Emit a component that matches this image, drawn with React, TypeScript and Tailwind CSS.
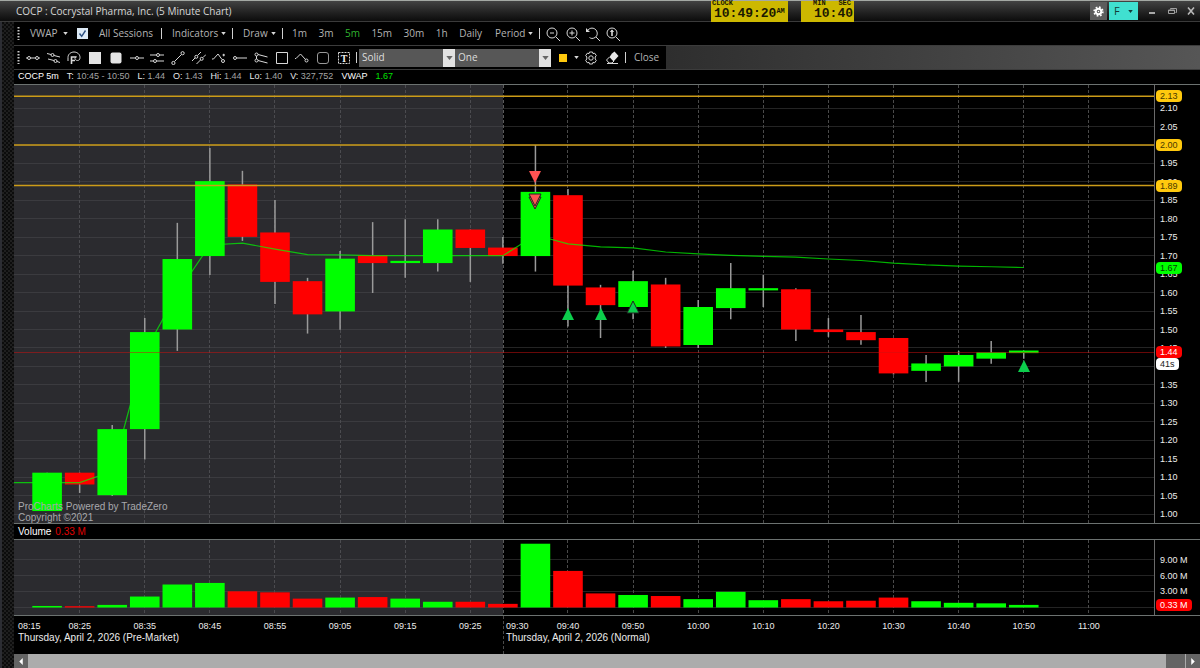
import type { ReactNode } from "react"

type Candle = {
  open: number
  close: number
  high: number
  low: number
  volume: number
}

// [open, close, high, low, volume in millions], one entry for every 5 minutes from 08:20
const rawCandles: number[][] = [
  [1.008, 1.112, 1.112, 1.008, 0.2],
  [1.112, 1.08, 1.112, 1.057, 0.15],
  [1.051, 1.23, 1.241, 1.049, 0.4],
  [1.23, 1.493, 1.531, 1.148, 2],
  [1.5, 1.691, 1.789, 1.442, 4.3],
  [1.699, 1.902, 1.992, 1.648, 4.6],
  [1.893, 1.751, 1.93, 1.74, 3],
  [1.763, 1.629, 1.851, 1.569, 2.8],
  [1.631, 1.541, 1.64, 1.489, 1.6],
  [1.549, 1.692, 1.713, 1.499, 1.8],
  [1.701, 1.68, 1.791, 1.599, 1.9],
  [1.68, 1.686, 1.799, 1.64, 1.6],
  [1.68, 1.771, 1.799, 1.657, 1],
  [1.771, 1.721, 1.771, 1.629, 1],
  [1.722, 1.699, 1.751, 1.678, 0.6],
  [1.699, 1.873, 2, 1.657, 12.1],
  [1.864, 1.619, 1.881, 1.508, 6.9],
  [1.614, 1.566, 1.621, 1.477, 2.6],
  [1.561, 1.631, 1.659, 1.528, 2.3],
  [1.622, 1.454, 1.64, 1.45, 2.1],
  [1.458, 1.561, 1.58, 1.45, 1.5],
  [1.558, 1.612, 1.68, 1.528, 2.9],
  [1.606, 1.612, 1.648, 1.561, 1.3],
  [1.609, 1.5, 1.612, 1.469, 1.5],
  [1.5, 1.493, 1.531, 1.48, 1.1],
  [1.493, 1.471, 1.539, 1.459, 1.2],
  [1.477, 1.381, 1.477, 1.378, 1.8],
  [1.388, 1.408, 1.431, 1.358, 1.1],
  [1.4, 1.431, 1.442, 1.358, 0.8],
  [1.421, 1.438, 1.469, 1.407, 0.7],
  [1.436, 1.443, 1.443, 1.421, 0.4],
]

const candles: Candle[] = rawCandles.map(([open, close, high, low, volume]) => ({
  open,
  close,
  high,
  low,
  volume,
}))

const vwap = [
  1.085, 1.085, 1.116, 1.439, 1.599, 1.729, 1.734, 1.718, 1.703, 1.702, 1.7, 1.7,
  1.7, 1.7, 1.7, 1.756, 1.732, 1.724, 1.721, 1.71, 1.705, 1.701, 1.698, 1.696,
  1.691, 1.687, 1.68, 1.675, 1.672, 1.67, 1.668,
]

const PLOT_WIDTH = 1140
const PRICE_HEIGHT = 438
const VOLUME_HEIGHT = 75
const SESSION_X = 489

const xAt = (i: number) => 33.1 + 32.555 * i
const priceY = (price: number) => 429 - (price - 1) * 369
const volumeY = (volume: number) => 67 - volume * 5.23

const percent = (value: number, total: number) => `${(value / total) * 100}%`

const gridPrices = Array.from({ length: 23 }, (_, i) => 1 + i * 0.05)
const levels = [2.132, 2, 1.89]

const timeTicks = [
  "08:25", "08:35", "08:45", "08:55", "09:05", "09:15", "09:25", "09:40", "09:50",
  "10:00", "10:10", "10:20", "10:30", "10:40", "10:50", "11:00",
].map((label) => {
  const [h, m] = label.split(":").map(Number)
  return { label, x: xAt((h * 60 + m - 500) / 5) }
})

const priceBadges = [
  { text: "2.13", price: 2.132, color: "bg-[#ffc90e] text-[#4a3a00]" },
  { text: "2.00", price: 2, color: "bg-[#ffc90e] text-[#4a3a00]" },
  { text: "1.89", price: 1.89, color: "bg-[#ffc90e] text-[#4a3a00]" },
  { text: "1.67", price: 1.667, color: "bg-[#00ff00] text-[#064006]" },
  { text: "1.44", price: 1.439, color: "bg-[#ff0000] text-white" },
  { text: "41s", price: 1.406, color: "bg-white text-[#222]" },
]

const quote = [
  ["T:", "10:45 - 10:50"],
  ["L:", "1.44"],
  ["O:", "1.43"],
  ["Hi:", "1.44"],
  ["Lo:", "1.40"],
  ["V:", "327,752"],
]

function Icon({ children }: { children: ReactNode }) {
  return (
    <svg
      viewBox="0 0 14 14"
      className="h-[14px] w-[14px] shrink-0"
      fill="none"
      stroke="#d8d8d8"
      strokeWidth="1"
      aria-hidden="true"
    >
      {children}
    </svg>
  )
}

function Caret() {
  return (
    <svg viewBox="0 0 6 4" className="h-[3px] w-[5px] shrink-0" aria-hidden="true">
      <path d="M0 0h6L3 4z" fill="#d8d8d8" />
    </svg>
  )
}

function Grip() {
  return (
    <svg viewBox="0 0 3 13" className="h-[13px] w-[3px] shrink-0" aria-hidden="true">
      <path d="M1.5 0v13" stroke="#c8c8c8" strokeWidth="2" strokeDasharray="1.5 1.5" />
    </svg>
  )
}

function Divider() {
  return <span className="h-[11px] w-px shrink-0 bg-[#d0d0d0]" />
}

const drawTools: { name: string; art: ReactNode }[] = [
  {
    name: "Segment",
    art: <path d="M0 7h1.500M4.500 7h5M12.500 7H14M1.500 7a1.500 1.500 0 1 0 3 0a1.500 1.500 0 1 0-3 0M9.500 7a1.500 1.500 0 1 0 3 0a1.500 1.500 0 1 0-3 0" />,
  },
  {
    name: "Channel",
    art: (
      <path d="M0 2.500l4 1M7 4.500l6 1.500M1 8l6 1.500M10 10.500l3 1M4 4a1.500 1.500 0 1 0 3 0a1.500 1.500 0 1 0-3 0M7 10a1.500 1.500 0 1 0 3 0a1.500 1.500 0 1 0-3 0" />
    ),
  },
  {
    name: "Fibonacci",
    art: (
      <>
        <path d="M1 10V6.500C1 3 4 1 7 1s6 2 6 5.500c0 2-1 3-2.500 3S8 8.500 8 7.500s1-2 2-1.500" />
        <path d="M4.500 13V6H9M4.500 9.500H8" strokeWidth="1.600" />
      </>
    ),
  },
  { name: "Filled rectangle", art: <path d="M1 1h12v12H1z" fill="#e4e4e4" stroke="none" /> },
  {
    name: "Filled rounded rectangle",
    art: <rect x="1.500" y="1.500" width="11" height="11" rx="2" fill="#e4e4e4" stroke="none" />,
  },
  { name: "Horizontal line", art: <path d="M0 7h5.500M8.500 7H14M5.500 7a1.500 1.500 0 1 0 3 0a1.500 1.500 0 1 0-3 0" /> },
  {
    name: "Parallel lines",
    art: (
      <path d="M0 4h6.500M9.500 4H14M0 10h3.500M6.500 10H14M6.500 4a1.500 1.500 0 1 0 3 0a1.500 1.500 0 1 0-3 0M3.500 10a1.500 1.500 0 1 0 3 0a1.500 1.500 0 1 0-3 0" />
    ),
  },
  {
    name: "Trend line",
    art: <path d="M3.500 10.500l7-7M.8 12a1.600 1.600 0 1 0 3.200 0a1.600 1.600 0 1 0-3.200 0M10 2.200a1.600 1.600 0 1 0 3.200 0a1.600 1.600 0 1 0-3.200 0" />,
  },
  {
    name: "Trend channel",
    art: (
      <path d="M0 10l3-3M5.500 4.500L9 1M4.500 13l4-4M11 6.500L14 3.500M2.800 5.800a1.500 1.500 0 1 0 3 0a1.500 1.500 0 1 0-3 0M8.200 7.800a1.500 1.500 0 1 0 3 0a1.500 1.500 0 1 0-3 0" />
    ),
  },
  {
    name: "Polyline",
    art: <path d="M0 8h1.500l4.500-5 4 5.500M9.500 10a1.500 1.500 0 1 0 3 0a1.500 1.500 0 1 0-3 0M10.500 4h2.500M11.700 2.800v2.500" />,
  },
  { name: "Ray", art: <path d="M3.500 7H14M.5 7a1.500 1.500 0 1 0 3 0a1.500 1.500 0 1 0-3 0" /> },
  {
    name: "Fan",
    art: (
      <path d="M4 3.500l9.500 2.500M4 9.500l9.500 2.500M2.500 5v3M1 3.500a1.500 1.500 0 1 0 3 0a1.500 1.500 0 1 0-3 0M1 9.500a1.500 1.500 0 1 0 3 0a1.500 1.500 0 1 0-3 0" />
    ),
  },
  { name: "Rectangle", art: <path d="M1.500 1.500h11v11h-11z" /> },
  {
    name: "Angle",
    art: <path d="M0 7.500h1L5.500 3l5 5.500M10 9.500a1.500 1.500 0 1 0 3 0a1.500 1.500 0 1 0-3 0" />,
  },
  { name: "Rounded rectangle", art: <rect x="1.500" y="1.500" width="11" height="11" rx="2.500" stroke="#999" /> },
  {
    name: "Text",
    art: (
      <>
        <path d="M1.500 1.500h11v11h-11z" strokeDasharray="2 1" />
        <text
          x="7"
          y="10.500"
          textAnchor="middle"
          fontSize="10"
          fontWeight="bold"
          fontFamily="Liberation Serif, serif"
          fill="#f0f0f0"
          stroke="none"
        >
          T
        </text>
      </>
    ),
  },
]

function TitleBar() {
  return (
    <header className="relative flex h-[22px] items-center border-t border-b border-t-[#a4a9a4] border-b-[#3a3a3a] bg-linear-to-b from-[#434343] to-[#0c0c0c] pl-4">
      <h1 className="flex-1 text-[10px] text-[#d6d6d6]">COCP : Cocrystal Pharma, Inc. (5 Minute Chart)</h1>
      <button className="mr-[2px] flex h-[18px] w-[17px] items-center justify-center bg-[#5c5c5c]" aria-label="Settings">
        <svg viewBox="0 0 14 14" className="h-[11px] w-[11px]" aria-hidden="true">
          <circle cx="7" cy="7" r="3.500" fill="none" stroke="#fff" strokeWidth="2.500" />
          <circle cx="7" cy="7" r="5.600" fill="none" stroke="#fff" strokeWidth="2" strokeDasharray="2.200 2.200" />
          <circle cx="7" cy="7" r="1" fill="#fff" />
        </svg>
      </button>
      <button className="flex h-[18px] w-[29px] items-center justify-between bg-[#40e0d0] px-[5px] text-[11px] text-[#123c38]">
        F
        <svg viewBox="0 0 6 4" className="h-[3px] w-[5px]" aria-hidden="true">
          <path d="M0 0h6L3 4z" fill="#123c38" />
        </svg>
      </button>
      <div className="flex w-[62px] items-center justify-between pr-[5px] pl-[11px]">
        <button className="flex h-3 w-[8px] items-center" aria-label="Minimize">
          <span className="mt-1 h-[2px] w-[6px] bg-[#a8a8a8]" />
        </button>
        <button aria-label="Restore">
          <svg viewBox="0 0 9 8" className="h-[8px] w-[9px]" fill="none" stroke="#a0a0a0" aria-hidden="true">
            <path d="M2.500 2.500v-1h6v4h-1M.5 3h6v3.500h-6zM.5 3.500h6" />
          </svg>
        </button>
        <button aria-label="Close window">
          <svg viewBox="0 0 8 8" className="h-[8px] w-[8px]" aria-hidden="true">
            <path d="M1 0.500l6 7M7 .5L1 7.500" stroke="#b8b8b8" strokeWidth="1.600" />
          </svg>
        </button>
      </div>

      {/* Floating clock widgets sit over the title bar */}
      <div className="absolute top-0 left-[711px] h-[21px] w-[77px] bg-[#cdb800] px-px font-['Liberation_Mono',monospace] font-bold text-[#1c1800]">
        <div className="text-[7px] leading-[5px]">CLOCK</div>
        <div className="flex pl-[2px] text-[13px] leading-4">
          10:49:20<span className="text-[7px] leading-[10px]">AM</span>
        </div>
      </div>
      <div className="absolute top-0 left-[801px] h-[21px] w-[53px] bg-[#cdb800] pr-px text-right font-['Liberation_Mono',monospace] font-bold text-[#1c1800]">
        <div className="flex justify-between pr-[2px] pl-3 text-[7px] leading-[5px]">
          <span>MIN</span>
          <span>SEC</span>
        </div>
        <div className="text-[13px] leading-4">10:40</div>
      </div>
    </header>
  )
}

function MainToolbar() {
  return (
    <div className="flex h-6 items-center border-b border-[#3c3c3c] pl-[3px] text-[10px] text-[#b4b4b4]">
      <Grip />
      <button className="ml-[10px] flex w-[38px] items-center justify-between">
        VWAP <Caret />
      </button>
      <label className="ml-[9px] flex items-center gap-[11px]">
        <span className="relative flex h-[11px] w-[11px]">
          <input type="checkbox" defaultChecked className="peer h-[11px] w-[11px] appearance-none bg-[#dce9f5]" />
          <svg
            viewBox="0 0 11 11"
            className="pointer-events-none absolute inset-0 hidden h-[11px] w-[11px] peer-checked:block"
            fill="none"
            aria-hidden="true"
          >
            <path d="M2.500 5.500l2.200 2.800L8.500 2.500" stroke="#2b4f80" strokeWidth="1.400" />
          </svg>
        </span>
        <span className="w-[62px]">All Sessions</span>
      </label>
      <Divider />
      <button className="ml-[10px] mr-[6px] flex w-[54px] items-center justify-between">
        Indicators <Caret />
      </button>
      <Divider />
      <button className="ml-[10px] mr-[6px] flex w-[33px] items-center justify-between">
        Draw <Caret />
      </button>
      <Divider />
      <div className="ml-[9px] flex w-[190px] items-center justify-between">
        <button>1m</button>
        <button>3m</button>
        <button className="text-[#2fb52f]">5m</button>
        <button>15m</button>
        <button>30m</button>
        <button>1h</button>
        <button>Daily</button>
      </div>
      <button className="ml-[13px] mr-[6px] flex w-[38px] items-center justify-between">
        Period <Caret />
      </button>
      <Divider />
      <div className="ml-[6px] flex items-center gap-[6px]">
        <button aria-label="Zoom out">
          <Icon>
            <path d="M1 6a5 5 0 1 0 10 0a5 5 0 1 0-10 0M10 10l4 4M4 6h4" />
          </Icon>
        </button>
        <button aria-label="Zoom in">
          <Icon>
            <path d="M1 6a5 5 0 1 0 10 0a5 5 0 1 0-10 0M10 10l4 4M3.500 6h5M6 3.500v5" />
          </Icon>
        </button>
        <button aria-label="Undo zoom">
          <Icon>
            <path d="M2 3C4 .5 8 .5 10 3s1.500 6-1 7.500-4 1-5.500 0M10 10l4 4" />
            <path d="M0 1v4h4z" fill="#d8d8d8" stroke="none" />
          </Icon>
        </button>
        <button aria-label="Reset zoom">
          <Icon>
            <path d="M1 6a5 5 0 1 0 10 0a5 5 0 1 0-10 0M10 10l4 4" />
            <path d="M6 3v6" strokeWidth="1.600" />
            <path d="M3.800 5L6 2.500 8.200 5z" fill="#d8d8d8" stroke="none" />
          </Icon>
        </button>
      </div>
    </div>
  )
}

function LineSelect({ label, options }: { label: string; options: string[] }) {
  return (
    <div className="relative h-[18px] w-[96px]">
      <select
        aria-label={label}
        className="h-[18px] w-full appearance-none bg-[#575757] pl-[3px] text-[10px] text-[#dedede]"
      >
        {options.map((option) => (
          <option key={option}>{option}</option>
        ))}
      </select>
      <span className="pointer-events-none absolute top-0 right-0 flex h-[18px] w-3 items-center justify-center bg-[#e2e2e2]">
        <svg viewBox="0 0 8 5" className="h-[4px] w-[7px]" aria-hidden="true">
          <path d="M0 0h8L4 5z" fill="#666" />
        </svg>
      </span>
    </div>
  )
}

function DrawToolbar() {
  return (
    <div className="flex h-6 border-b border-[#3c3c3c] bg-linear-to-r from-[#2e2e2e] from-55% to-[#565656] text-[10px] text-[#b4b4b4]">
      <div className="flex items-center bg-black pr-[7px] pl-[3px]">
        <Grip />
        <div className="mr-[5px] ml-[6px] flex w-[325px] items-center justify-between">
          {drawTools.map((tool) => (
            <button key={tool.name} aria-label={tool.name}>
              <Icon>{tool.art}</Icon>
            </button>
          ))}
        </div>
        <Divider />
        <div className="ml-[2px] flex">
          <LineSelect label="Line style" options={["Solid", "Dash", "Dot"]} />
          <LineSelect label="Line width" options={["One", "Two", "Three"]} />
        </div>
        <button className="ml-2 flex w-[20px] items-center justify-between" aria-label="Line color">
          <span className="h-[8px] w-[8px] bg-[#ffc90e]" />
          <Caret />
        </button>
        <button className="ml-[5px]" aria-label="Drawing settings">
          <Icon>
            <circle cx="7" cy="7" r="2.200" />
            <path d="M5.500 1h3l.5 1.700 1.700-.5 1.600 2.400L11.200 6v2l1.100 1.400-1.600 2.400-1.700-.5L8.500 13h-3L5 11.300l-1.700.5-1.600-2.400L2.800 8V6L1.700 4.600l1.600-2.400 1.700.5z" />
          </Icon>
        </button>
        <button className="ml-[7px]" aria-label="Erase">
          <Icon>
            <path d="M7 2.500L9.500 .5 13.500 5 8.500 10.500 4.500 6z" fill="#e8e8e8" stroke="none" />
            <path d="M4.500 6L1.500 9l2.500 3h3l2-2M2 12.500h11" />
          </Icon>
        </button>
        <span className="w-[6px]" />
        <Divider />
        <button className="ml-[8px]">Close</button>
      </div>
    </div>
  )
}

function QuoteBar() {
  return (
    <div className="flex h-[14px] items-center gap-2 pl-1 text-[9px] text-[#a4a4a4]">
      <span className="text-white">COCP 5m</span>
      {quote.map(([name, value]) => (
        <span key={name} className="whitespace-nowrap">
          <span className="text-[#e8e8e8]">{name}</span> {value}
        </span>
      ))}
      <span className="text-white">VWAP</span>
      <span className="text-[#00e000]">1.67</span>
    </div>
  )
}

function VerticalGrid({ height }: { height: number }) {
  return (
    <g strokeDasharray="3 2" shapeRendering="crispEdges">
      {timeTicks.map((tick) => (
        <path
          key={tick.label}
          d={`M${tick.x} 0V${height}`}
          stroke={tick.x < SESSION_X ? "#4b4b4f" : "#4a4a4a"}
        />
      ))}
      <path d={`M${SESSION_X} 0V${height}`} stroke="#5a5a5a" />
    </g>
  )
}

function Marker({ x, y, down, outlined }: { x: number; y: number; down?: boolean; outlined?: boolean }) {
  return (
    <path
      d={down ? `M${x - 6} ${y - 6}h12l-6 12z` : `M${x} ${y - 6}l6 12h-12z`}
      fill={down ? "#ff5353" : "#0cce4c"}
      stroke={outlined ? "#222" : "none"}
    />
  )
}

function PriceChart() {
  const vwapPoints = [`0,${priceY(1.085)}`, ...vwap.map((v, i) => `${xAt(i)},${priceY(v)}`)].join(" ")

  return (
    <section className="flex min-h-[438px] flex-1 border-t border-[#6c7270]">
      <div className="relative flex-1 border-r border-[#6a6a6a]">
        <svg
          viewBox={`0 0 ${PLOT_WIDTH} ${PRICE_HEIGHT}`}
          preserveAspectRatio="none"
          className="absolute inset-0 h-full w-full"
          role="img"
          aria-label="COCP 5 minute price chart"
        >
          <rect width={SESSION_X} height={PRICE_HEIGHT} fill="#2b2b2f" />
          {gridPrices.map((price) => (
            <g key={price} shapeRendering="crispEdges">
              <path d={`M0 ${priceY(price)}H${SESSION_X}`} stroke="#3b3b3f" />
              <path d={`M${SESSION_X} ${priceY(price)}H${PLOT_WIDTH}`} stroke="#242424" />
            </g>
          ))}
          <VerticalGrid height={PRICE_HEIGHT} />
          {candles.map((c, i) => {
            const top = priceY(Math.max(c.open, c.close))
            const bottom = priceY(Math.min(c.open, c.close))
            return (
              <g key={i}>
                <path d={`M${xAt(i)} ${priceY(c.high)}V${priceY(c.low)}`} stroke="#9a9a9a" strokeWidth="1.500" />
                <rect
                  x={xAt(i) - 14.8}
                  y={top}
                  width="29.600"
                  height={bottom - top}
                  fill={c.close > c.open ? "#00ff00" : "#ff0000"}
                />
              </g>
            )
          })}
          <polyline points={vwapPoints} fill="none" stroke="#00ff00" strokeOpacity="0.7" strokeWidth="1.200" />
          {levels.map((level) => (
            <path key={level} d={`M0 ${priceY(level)}H${PLOT_WIDTH}`} stroke="#cc9c18" strokeWidth="1.500" />
          ))}
          <path
            d={`M0 ${priceY(1.439)}H${PLOT_WIDTH}`}
            stroke="#d01010"
            strokeOpacity="0.5"
            shapeRendering="crispEdges"
          />
          <Marker x={521} y={92} down />
          <Marker x={521} y={118} down outlined />
          <Marker x={521} y={115} down outlined />
          <Marker x={554} y={229} />
          <Marker x={587} y={229} />
          <Marker x={619} y={222} outlined />
          <Marker x={1010} y={281} />
        </svg>
        <p className="absolute bottom-0 left-1 text-[10px] leading-[11px] text-[#a8a8ac]">
          ProCharts Powered by TradeZero
          <br />
          Copyright ©2021
        </p>
      </div>
      <div className="relative w-[45px] text-[9px] leading-3 text-[#ececec]">
        {gridPrices.map((price) => (
          <span
            key={price}
            className="absolute left-[5px] -translate-y-1/2"
            style={{ top: percent(priceY(price), PRICE_HEIGHT) }}
          >
            {price.toFixed(2)}
          </span>
        ))}
        {priceBadges.map((badge) => (
          <span
            key={badge.text}
            className={`absolute left-px -translate-y-1/2 rounded-[4px] px-1 ${badge.color}`}
            style={{ top: percent(priceY(badge.price), PRICE_HEIGHT) }}
          >
            {badge.text}
          </span>
        ))}
      </div>
    </section>
  )
}

function VolumeChart() {
  return (
    <section>
      <h2 className="flex h-[17px] items-center gap-1 border-t border-b border-[#6c7270] pl-1 text-[10px] text-white">
        Volume <span className="text-[#e00000]">0.33 M</span>
      </h2>
      <div className="flex h-[75px]">
        <div className="relative flex-1 border-r border-[#6a6a6a]">
          <svg
            viewBox={`0 0 ${PLOT_WIDTH} ${VOLUME_HEIGHT}`}
            preserveAspectRatio="none"
            className="absolute inset-0 h-full w-full"
            role="img"
            aria-label="Volume"
          >
            <rect width={SESSION_X} height={VOLUME_HEIGHT} fill="#2b2b2f" />
            {[0, 3, 6, 9].map((v) => (
              <g key={v} shapeRendering="crispEdges">
                <path d={`M0 ${volumeY(v)}H${SESSION_X}`} stroke="#3b3b3f" />
                <path d={`M${SESSION_X} ${volumeY(v)}H${PLOT_WIDTH}`} stroke="#242424" />
              </g>
            ))}
            <VerticalGrid height={VOLUME_HEIGHT} />
            {candles.map((c, i) => (
              <rect
                key={i}
                x={xAt(i) - 14.8}
                y={volumeY(c.volume)}
                width="29.600"
                height={67.5 - volumeY(c.volume)}
                fill={c.close > c.open ? "#00ff00" : "#ff0000"}
              />
            ))}
          </svg>
        </div>
        <div className="relative w-[45px] text-[9px] leading-3 text-[#ececec]">
          {[3, 6, 9].map((v) => (
            <span
              key={v}
              className="absolute left-[5px] -translate-y-1/2 whitespace-nowrap"
              style={{ top: percent(volumeY(v), VOLUME_HEIGHT) }}
            >
              {v.toFixed(2)} M
            </span>
          ))}
          <span
            className="absolute left-px -translate-y-1/2 rounded-[4px] bg-[#ff0000] px-1 whitespace-nowrap text-white"
            style={{ top: percent(volumeY(0.33), VOLUME_HEIGHT) }}
          >
            0.33 M
          </span>
        </div>
      </div>
    </section>
  )
}

function TimeAxis() {
  return (
    <div className="flex h-[39px] border-t border-[#6c7270] text-[9px] leading-3 text-[#ececec]">
      <div className="relative flex-1">
        {timeTicks.map((tick) => (
          <span
            key={tick.label}
            className="absolute top-1 -translate-x-1/2"
            style={{ left: percent(tick.x, PLOT_WIDTH) }}
          >
            {tick.label}
          </span>
        ))}
        <div className="absolute top-1 left-1">
          08:15
          <div className="text-[10px] leading-3 whitespace-nowrap">Thursday, April 2, 2026 (Pre-Market)</div>
        </div>
        <div
          className="absolute top-0 bottom-0 border-l border-dashed border-[#4a4a4a] pt-1 pl-[2px]"
          style={{ left: percent(SESSION_X, PLOT_WIDTH) }}
        >
          09:30
          <div className="text-[10px] leading-3 whitespace-nowrap">Thursday, April 2, 2026 (Normal)</div>
        </div>
      </div>
      <div className="w-[46px]" />
    </div>
  )
}

function ScrollBar() {
  return (
    <div className="flex h-[14px] bg-[#646464]">
      <button className="flex w-[14px] items-center justify-center" aria-label="Scroll left">
        <svg viewBox="0 0 4 8" className="h-[7px] w-1" aria-hidden="true">
          <path d="M4 0v8L0 4z" fill="#fff" />
        </svg>
      </button>
      <div className="flex-1 bg-[#acacac]" />
      <div className="w-[20px] border-r border-[#aaa]" />
      <button className="flex w-[14px] items-center justify-center" aria-label="Scroll right">
        <svg viewBox="0 0 4 8" className="h-[7px] w-1" aria-hidden="true">
          <path d="M0 0v8l4-4z" fill="#fff" />
        </svg>
      </button>
    </div>
  )
}

export default function App() {
  return (
    <div className="flex min-h-screen flex-col bg-black font-['Open_Sans',sans-serif]">
      <TitleBar />
      <div className="flex flex-1">
        {/* Carbon texture down the window edge */}
        <div className="w-[14px] border-l-2 border-[#2c2d33] bg-[#0c0c0c] bg-[conic-gradient(#1f1f1f_25%,#0c0c0c_0_50%,#1f1f1f_0_75%,#0c0c0c_0)] bg-[size:4px_4px]" />
        <main className="flex min-w-0 flex-1 flex-col">
          <MainToolbar />
          <DrawToolbar />
          <div className="flex flex-1 flex-col font-['Liberation_Sans',Arial,sans-serif]">
            <QuoteBar />
            <PriceChart />
            <VolumeChart />
            <TimeAxis />
          </div>
          <ScrollBar />
        </main>
      </div>
    </div>
  )
}
